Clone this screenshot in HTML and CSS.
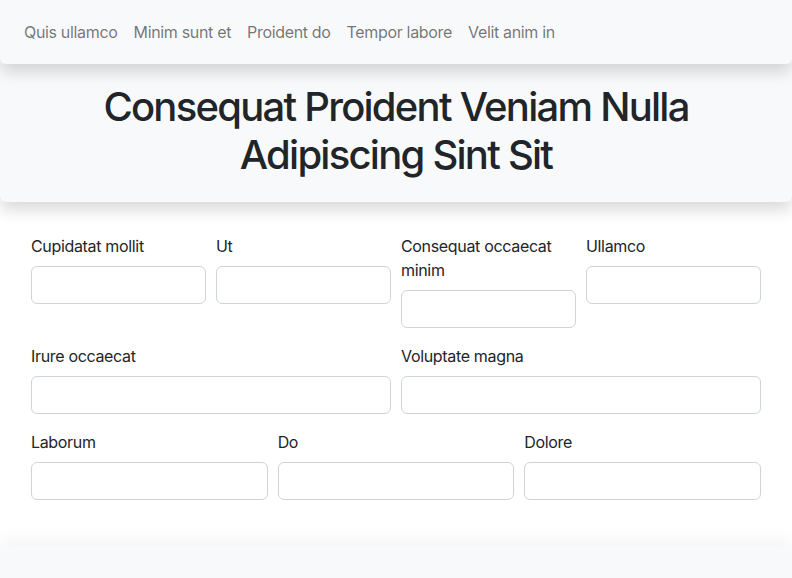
FILE: index.html
```html
<!DOCTYPE html>
<html lang="en">
<head>
<meta charset="utf-8">
<title>Form</title>
<link rel="stylesheet" href="styles.css">
</head>
<body>
<nav class="navbar">
  <a class="nav-link" href="#">Quis ullamco</a>
  <a class="nav-link" href="#">Minim sunt et</a>
  <a class="nav-link" href="#">Proident do</a>
  <a class="nav-link" href="#">Tempor labore</a>
  <a class="nav-link" href="#">Velit anim in</a>
</nav>
<header class="hero">
  <h1 class="title">Consequat Proident Veniam Nulla<br>Adipiscing Sint Sit</h1>
</header>
<main class="content">
  <form class="form">
    <div class="row row-4">
      <div class="field"><label class="label">Cupidatat mollit</label><input class="input" type="text"></div>
      <div class="field"><label class="label">Ut</label><input class="input" type="text"></div>
      <div class="field"><label class="label">Consequat occaecat minim</label><input class="input" type="text"></div>
      <div class="field"><label class="label">Ullamco</label><input class="input" type="text"></div>
    </div>
    <div class="row row-2">
      <div class="field"><label class="label">Irure occaecat</label><input class="input" type="text"></div>
      <div class="field"><label class="label">Voluptate magna</label><input class="input" type="text"></div>
    </div>
    <div class="row row-3">
      <div class="field"><label class="label">Laborum</label><input class="input" type="text"></div>
      <div class="field"><label class="label">Do</label><input class="input" type="text"></div>
      <div class="field"><label class="label">Dolore</label><input class="input" type="text"></div>
    </div>
  </form>
</main>
<footer class="footer"></footer>
</body>
</html>
```
FILE: styles.css
```css
* { box-sizing: border-box; }
html, body { margin: 0; padding: 0; }
body {
  font-family: Inter, "Liberation Sans", Arial, sans-serif;
  font-size: 16px;
  line-height: 24px;
  letter-spacing: -0.33px;
  color: #212529;
  background: #fff;
  height: 578px;
  overflow: hidden;
  display: flex;
  flex-direction: column;
}
.navbar {
  position: relative;
  z-index: 2;
  height: 64px;
  display: flex;
  align-items: center;
  padding: 0 16px;
  background: #f8f9fa;
  border-radius: 0 0 6px 6px;
  box-shadow: 0 8px 16px rgba(0,0,0,.15);
}
.nav-link {
  padding: 8px;
  color: rgba(0,0,0,.55);
  text-decoration: none;
}
.hero {
  position: relative;
  z-index: 1;
  background: #f8f9fa;
  border-radius: 0 0 6px 6px;
  box-shadow: 0 8px 16px rgba(0,0,0,.15);
  padding: 19px 0 23px;
  text-align: center;
}
.title {
  margin: 0;
  font-size: 40px;
  line-height: 48px;
  font-weight: 500;
  letter-spacing: -1.75px;
}
.content {
  padding: 32px 31px 0;
  flex: 1;
}
.form {
  display: flex;
  flex-direction: column;
  gap: 16px;
}
.row {
  display: grid;
  column-gap: 10px;
  align-items: start;
}
.row-4 { grid-template-columns: repeat(4, 1fr); }
.row-2 { grid-template-columns: repeat(2, 1fr); }
.row-3 { grid-template-columns: repeat(3, 1fr); }
.field { display: flex; flex-direction: column; }
.label { display: block; margin-bottom: 8px; }
.input {
  display: block;
  width: 100%;
  height: 38px;
  border: 1px solid #ced4da;
  border-radius: 6px;
  background: #fff;
  font: inherit;
  padding: 6px 12px;
}
.footer {
  height: 32px;
  background: #f8f9fa;
  box-shadow: 0 -8px 16px rgba(0,0,0,.04);
}
```
